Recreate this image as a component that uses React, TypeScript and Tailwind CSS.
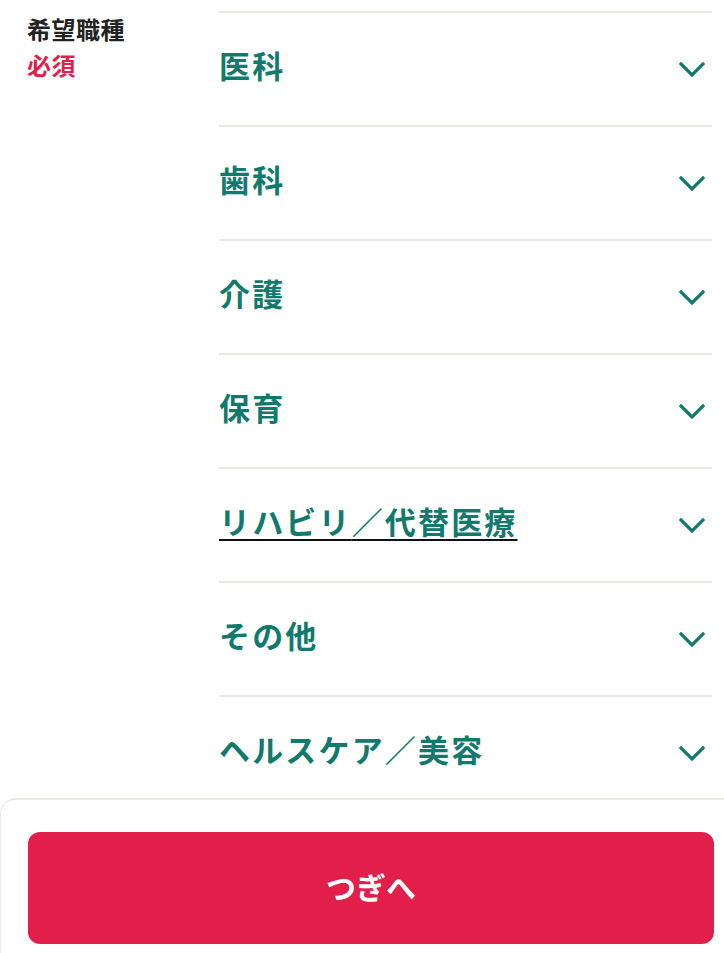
import React from 'react';

const jobs = ['医科', '歯科', '介護', '保育', 'リハビリ／代替医療', 'その他', 'ヘルスケア／美容'];

const Chevron = () => (
  <svg width="26" height="15" viewBox="0 0 26 15" fill="none" className="shrink-0">
    <path d="M2 2l11 11L24 2" stroke="#127a6d" strokeWidth="3.2" strokeLinecap="square" />
  </svg>
);

const Label = ({ text }: { text: string }) => {
  if (text === 'リハビリ／代替医療') {
    return (
      <span className="mb-[8px]">
        <span className="underline decoration-[#111] decoration-2 underline-offset-[5px]">リハビリ</span>
        <span className="underline decoration-[#111] decoration-2 underline-offset-[5px]">／代替医療</span>
      </span>
    );
  }
  return <span className="mb-[8px]">{text}</span>;
};

export default function App() {
  return (
    <div
      className="relative min-h-[953px] w-[724px] bg-white"
      style={{ fontFamily: '"Noto Sans CJK JP", "Noto Sans", sans-serif' }}
    >
      <div className="flex pt-[11px] pb-[160px]">
        <div className="w-[219px] shrink-0 pl-[27px]">
          <div className="text-[24px] font-bold leading-[36px] tracking-[0.02em] text-[#222]">希望職種</div>
          <div className="text-[24px] font-bold leading-[36px] tracking-[0.02em] text-[#e21e4a]">必須</div>
        </div>
        <ul className="mr-[12px] flex-1">
          {jobs.map((j) => (
            <li
              key={j}
              className="flex h-[114px] items-center justify-between border-t-2 border-[#ece8e4] pr-[7px] text-[31px] font-bold tracking-[0.07em] text-[#127a6d]"
            >
              <Label text={j} />
              <Chevron />
            </li>
          ))}
        </ul>
      </div>
      <div className="fixed bottom-0 left-0 h-[155px] w-[724px] rounded-tl-[16px] border-t-2 border-l border-[#ece8e4] bg-white px-[27px] pt-[32px]">
        <button className="flex h-[112px] w-[686px] items-center justify-center rounded-[12px] bg-[#e21e4a] pb-[4px] text-[30px] font-bold text-white">
          つぎへ
        </button>
      </div>
    </div>
  );
}
